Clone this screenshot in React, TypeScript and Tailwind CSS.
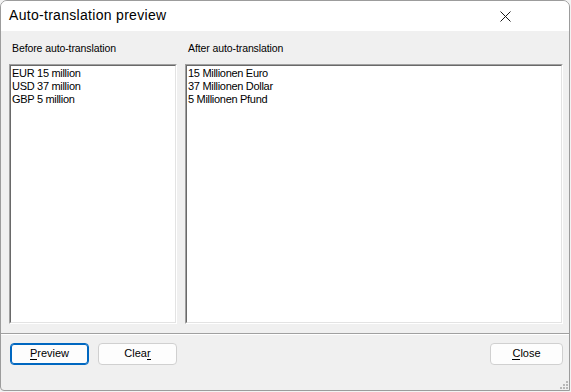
export default function App() {
  const ui = { fontFamily: '"Liberation Sans", Arial, sans-serif' };

  return (
    <div className="w-[571px] h-[392px] bg-[#f3f3f3]" style={ui}>
      <div className="w-[570px] h-[391px] flex flex-col overflow-hidden rounded-t-[7px] rounded-bl-[4px] border border-[#9c9c9c] bg-[#f0f0f0] relative">

        {/* title bar */}
        <div className="h-[30px] bg-white flex items-center justify-between pl-[8px] pr-[14px] shrink-0">
          <span className="text-[14px] tracking-[0.3px] text-black -mt-[1px]">Auto-translation preview</span>
          <svg width="11" height="11" viewBox="0 0 11 11" className="mr-[44px]">
            <path d="M0.5 0.5 L10.5 10.5 M10.5 0.5 L0.5 10.5" stroke="#1a1a1a" strokeWidth="1" />
          </svg>
        </div>

        {/* lists */}
        <div className="flex gap-[8px] pl-[8px] pr-[6px] pt-[7px] text-[10.5px] tracking-[-0.1px] text-black">
          <div className="flex flex-col w-[168px]">
            <div className="h-[26px] pl-[3px] pt-[3px]">Before auto-translation</div>
            <Box lines={["EUR 15 million", "USD 37 million", "GBP 5 million"]} />
          </div>
          <div className="flex flex-col w-[378px]">
            <div className="h-[26px] pl-[3px] pt-[3px]">After auto-translation</div>
            <Box lines={["15 Millionen Euro", "37 Millionen Dollar", "5 Millionen Pfund"]} />
          </div>
        </div>

        {/* separator */}
        <div className="mt-[9px] border-t border-[#a0a0a0] border-b border-b-white" />

        {/* buttons */}
        <div className="flex items-center pl-[9px] pr-[6px] pt-[8px] text-[11px] leading-[14px]">
          <button className="w-[79px] h-[22px] pb-[2px] rounded-[4px] border border-[#0067c0] bg-[#fdfdfd] shadow-[inset_0_0_0_1px_#0067c0] text-black">
            <span className="border-b border-black">P</span>review
          </button>
          <button className="ml-[9px] w-[79px] h-[22px] pb-[2px] rounded-[4px] border border-[#d0d0d0] bg-[#fdfdfd] text-black">
            Clea<span className="border-b border-black">r</span>
          </button>
          <div className="flex-1" />
          <button className="w-[73px] h-[22px] pb-[2px] rounded-[4px] border border-[#d0d0d0] bg-[#fdfdfd] text-black">
            <span className="border-b border-black">C</span>lose
          </button>
        </div>

        {/* size grip */}
        <svg width="10" height="10" viewBox="0 0 10 10" className="absolute right-[1px] bottom-[1px]">
          {[
            [8, 2], [8, 5], [5, 5], [8, 8], [5, 8], [2, 8],
          ].map(([x, y], i) => (
            <rect key={i} x={x} y={y} width="2" height="2" fill="#b8b8b8" />
          ))}
        </svg>
      </div>
    </div>
  );
}

function Box({ lines }: { lines: string[] }) {
  return (
    <div className="h-[260px] border-t border-l border-[#a0a0a0] border-b border-r border-b-white border-r-white">
      <div className="h-full bg-white border-t border-l border-[#696969] border-b border-r border-b-[#e3e3e3] border-r-[#e3e3e3] pl-[1px] pt-[1px] text-[11px] leading-[13px] tracking-[-0.3px] text-black">
        {lines.map((l) => (
          <div key={l}>{l}</div>
        ))}
      </div>
    </div>
  );
}
